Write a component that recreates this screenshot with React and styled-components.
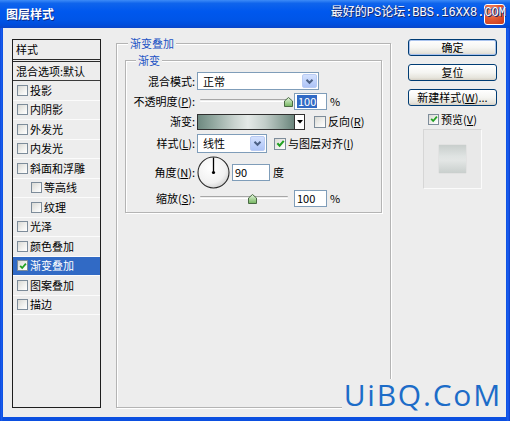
import React from 'react';
import styled, { createGlobalStyle } from 'styled-components';

const GlobalStyle = createGlobalStyle`
  html, body { margin: 0; padding: 0; background: #ffffff; }
  body { font-family: "Noto Sans CJK SC", "Noto Sans", sans-serif; font-size: 11px; color: #000; }
  * { box-sizing: border-box; }
`;

const Window = styled.div`
  position: relative;
  width: 510px;
  height: 421px;
  display: flex;
  flex-direction: column;
  background: linear-gradient(90deg, #0a3fd0 0px, #1a5ef0 1px, #0b4fe0 3px, #0b4fe0 506px, #1a5ef0 508px, #0a3acb 510px);
  overflow: hidden;
`;

const TitleBar = styled.div`
  position: relative;
  height: 28px;
  flex-shrink: 0;
  display: flex;
  align-items: center;
  justify-content: space-between;
  padding: 0 5px 0 6px;
  background: linear-gradient(180deg, #3d8bf7 0%, #0f64ec 12%, #0058ee 40%, #0055e8 70%, #004ddc 88%, #0a45c8 100%);
`;

const Title = styled.span`
  color: #ffffff;
  font-size: 12px;
  font-weight: bold;
  line-height: 14px;
  text-shadow: 1px 1px 0 #0a2a8a;
`;

const CloseBtn = styled.span`
  width: 21px;
  height: 21px;
  border: 1px solid #ffffff;
  border-radius: 3px;
  background: radial-gradient(circle at 35% 30%, #f59a7c 0%, #e25a33 45%, #c8391a 100%);
`;

const TitleMark = styled.span`
  position: absolute;
  right: 4px;
  top: 6px;
  color: #ffffff;
  font-family: "Liberation Mono", "Noto Sans CJK SC", monospace;
  font-size: 12px;
  letter-spacing: 0;
  line-height: 14px;
  white-space: nowrap;
  text-shadow: 1px 1px 0 #1a2a6a, -1px 0 0 #2a4aa0;
`;

const Client = styled.div`
  flex: 1;
  margin: 0 4px 4px 3px;
  background: #ededed;
  display: flex;
  align-items: flex-start;
  padding: 11px 9px 0 9px;
`;

/* ---------- left list ---------- */
const StyleList = styled.div`
  width: 89px;
  height: 369px;
  flex-shrink: 0;
  border: 1px solid #1e1e1e;
  display: flex;
  flex-direction: column;
  background: #ededed;
`;

const ListHeader = styled.div`
  height: 22px;
  padding-left: 3px;
  display: flex;
  align-items: center;
  border-bottom: 3px double #2a2a2a;
  line-height: 13px;
`;

const ListBlend = styled.div`
  height: 19px;
  padding-left: 3px;
  display: flex;
  align-items: center;
  border-bottom: 1px solid #3a3a3a;
  line-height: 13px;
`;

const ListItem = styled.div`
  height: 19.5px;
  display: flex;
  align-items: center;
  gap: 2px;
  padding-left: ${p => (p.$sub ? 18 : 4)}px;
  border-bottom: 1px solid #fbfbfb;
  background: ${p => (p.$selected ? '#316ac5' : 'transparent')};
  color: ${p => (p.$selected ? '#ffffff' : '#000000')};
  line-height: 13px;
`;

const Box = styled.span`
  display: inline-flex;
  align-items: center;
  justify-content: center;
  flex-shrink: 0;
  width: ${p => p.$size}px;
  height: ${p => p.$size}px;
  border: 1px solid ${p => (p.$dark ? '#1c5180' : '#7d8c9a')};
  background: linear-gradient(135deg, #d9d9d4 0%, #f2f2f0 60%, #ffffff 100%);
`;

function Check({ checked, size = 11, dark }) {
  return (
    <Box $size={size} $dark={dark}>
      {checked && (
        <svg width={size - 3} height={size - 3} viewBox="0 0 8 8">
          <path d="M1.2 3.8 L3.2 6 L6.9 1.6" stroke="#21a121" strokeWidth="1.8" fill="none" />
        </svg>
      )}
    </Box>
  );
}

/* ---------- group boxes ---------- */
const Group = styled.div`
  position: relative;
  flex-shrink: 0;
  width: ${p => p.$w}px;
  height: ${p => p.$h}px;
  margin: ${p => p.$m};
  padding: ${p => p.$pad};
  border: 1px solid #b4b4b4;
  box-shadow: 1px 1px 0 #ffffff, inset 1px 1px 0 #ffffff;
`;

const Legend = styled.span`
  position: absolute;
  top: -8px;
  left: ${p => p.$x}px;
  padding: 0 2px;
  background: #ededed;
  color: #1b52c4;
  line-height: 14px;
  font-size: 11px;
`;

const Row = styled.div`
  height: ${p => p.$h}px;
  display: flex;
  align-items: center;
`;

const Label = styled.span`
  width: 69px;
  margin-right: 2px;
  flex-shrink: 0;
  text-align: right;
  line-height: 13px;
  white-space: nowrap;
`;

const U = styled.span`
  text-decoration: underline;
`;

const Select = styled.div`
  width: ${p => p.$w}px;
  height: ${p => p.$h}px;
  border: 1px solid #7f9db9;
  background: #ffffff;
  display: flex;
  align-items: stretch;
  justify-content: space-between;
  padding: 1px;
`;

const SelectText = styled.span`
  padding-left: 4px;
  display: flex;
  align-items: center;
  line-height: 13px;
`;

const DropBtn = styled.span`
  width: 15px;
  display: flex;
  align-items: center;
  justify-content: center;
  border-radius: 2px;
  border: 1px solid #b9cbf3;
  background: linear-gradient(180deg, #d4e1fd 0%, #bccffa 60%, #aec4f6 100%);
`;

function Chevron() {
  return (
    <svg width="9" height="7" viewBox="0 0 9 7">
      <path d="M1.5 1.8 L4.5 4.8 L7.5 1.8" stroke="#4d6185" strokeWidth="2" fill="none" />
    </svg>
  );
}

const SliderWrap = styled.div`
  position: relative;
  width: 94px;
  height: 14px;
  flex-shrink: 0;
  padding: 0 3px 0 3px;
  display: flex;
  align-items: center;
`;

const Track = styled.span`
  flex: 1;
  height: 3px;
  border-top: 1px solid #a6a6a6;
  border-bottom: 1px solid #ffffff;
  border-radius: 1px;
  position: relative;
  top: -1px;
`;

const Thumb = styled.svg`
  position: absolute;
  top: 2px;
`;

function Slider({ pct }) {
  const center = 3 + pct * 88;
  return (
    <SliderWrap>
      <Track />
      <Thumb width="9" height="10" viewBox="0 0 9 10" style={{ left: center - 4.5 }}>
        <defs>
          <linearGradient id="tg" x1="0" y1="0" x2="0" y2="1">
            <stop offset="0" stopColor="#e4f5dc" />
            <stop offset="1" stopColor="#73b55e" />
          </linearGradient>
        </defs>
        <path d="M0.5 4 L4.5 0.5 L8.5 4 L8.5 9.5 L0.5 9.5 Z" fill="url(#tg)" stroke="#4a6a44" strokeWidth="1" />
      </Thumb>
    </SliderWrap>
  );
}

const Input = styled.div`
  width: ${p => p.$w}px;
  height: 17px;
  margin-left: ${p => p.$ml}px;
  border: 1px solid #7f9db9;
  background: #ffffff;
  display: flex;
  align-items: center;
  padding-left: 2px;
  line-height: 13px;
`;

const Selected = styled.span`
  background: #316ac5;
  color: #ffffff;
  padding: 0 1px;
`;

const Unit = styled.span`
  margin-left: 3px;
  line-height: 13px;
`;

const Gradient = styled.div`
  width: 98px;
  height: 16px;
  border: 1px solid #303030;
  background: linear-gradient(90deg, #6e8980 0%, #90a69e 15%, #c9d3cf 38%, #e4e9e7 52%, #c2cdc9 70%, #8ea39b 88%, #6a857c 100%);
`;

const GradArrow = styled.div`
  width: 10px;
  height: 16px;
  border: 1px solid #303030;
  border-left: none;
  background: #ffffff;
  display: flex;
  align-items: center;
  justify-content: center;
`;

const CheckLabel = styled.span`
  display: flex;
  align-items: center;
  gap: 2px;
  margin-left: ${p => p.$ml}px;
  line-height: 13px;
  white-space: nowrap;
`;

function Dial() {
  return (
    <svg width="33" height="33" viewBox="0 0 33 33">
      <defs>
        <radialGradient id="dg" cx="0.4" cy="0.35" r="0.7">
          <stop offset="0" stopColor="#ffffff" />
          <stop offset="0.7" stopColor="#f1f1f1" />
          <stop offset="1" stopColor="#cfcfcf" />
        </radialGradient>
      </defs>
      <circle cx="16.5" cy="16.5" r="15.5" fill="url(#dg)" stroke="#2a2a2a" strokeWidth="1.1" />
      <line x1="16.5" y1="16.5" x2="16.5" y2="1.5" stroke="#000" strokeWidth="1.3" />
      <circle cx="16.5" cy="16.5" r="1.6" fill="#000" />
    </svg>
  );
}

/* ---------- right column ---------- */
const RightCol = styled.div`
  width: 89px;
  margin-left: 17px;
  flex-shrink: 0;
  display: flex;
  flex-direction: column;
  align-items: center;
`;

const Button = styled.div`
  width: 89px;
  height: 17px;
  margin-bottom: 8px;
  border: 1px solid #003c74;
  border-radius: 3px;
  background: linear-gradient(180deg, #ffffff 0%, #f5f5f2 50%, #e6e4dc 85%, #d6d0c5 100%);
  box-shadow: ${p => (p.$default ? 'inset 0 0 0 1px #a9c3ee' : 'none')};
  display: flex;
  align-items: center;
  justify-content: center;
  line-height: 13px;
  white-space: nowrap;
`;

const PreviewRow = styled.div`
  height: 12px;
  margin-top: -1px;
  display: flex;
  align-items: center;
  gap: 2px;
  line-height: 13px;
`;

const PreviewBox = styled.div`
  width: 59px;
  height: 60px;
  margin-top: 4px;
  border: 1px solid;
  border-color: #d6d6d6 #fbfbfb #fbfbfb #d6d6d6;
  background: #e9e9e9;
  display: flex;
  align-items: center;
  justify-content: center;
`;

const PreviewSwatch = styled.div`
  width: 27px;
  height: 28px;
  background: linear-gradient(180deg, #c8cecc 0%, #dfe3e2 40%, #e3e6e5 55%, #c9cfcd 100%);
  box-shadow: 0 0 1px #c0c0c0;
`;

const Watermark = styled.div`
  position: absolute;
  right: 10px;
  bottom: 10px;
  height: 32px;
  padding-left: 2px;
  background: #ededed;
  color: #1c6cc8;
  font-family: "Open Sans", "DejaVu Sans", sans-serif;
  font-size: 30px;
  font-weight: 500;
  line-height: 32px;
  letter-spacing: 1.8px;
  margin-right: -2px;
`;

const items = [
  { t: '投影' },
  { t: '内阴影' },
  { t: '外发光' },
  { t: '内发光' },
  { t: '斜面和浮雕' },
  { t: '等高线', sub: true },
  { t: '纹理', sub: true },
  { t: '光泽' },
  { t: '颜色叠加' },
  { t: '渐变叠加', checked: true, selected: true },
  { t: '图案叠加' },
  { t: '描边' },
];

export default function App() {
  return (
    <>
      <GlobalStyle />
      <Window>
        <TitleBar>
          <Title>图层样式</Title>
          <CloseBtn />
          <TitleMark>最好的PS论坛:BBS.16XX8.COM</TitleMark>
        </TitleBar>
        <Client>
          <StyleList>
            <ListHeader>样式</ListHeader>
            <ListBlend>混合选项:默认</ListBlend>
            {items.map(it => (
              <ListItem key={it.t} $sub={it.sub} $selected={it.selected}>
                <Check checked={it.checked} size={11} />
                <span>{it.t}</span>
              </ListItem>
            ))}
          </StyleList>

          <Group $w={275} $h={365} $m="4px 0 0 15px" $pad="16px 8px 0 8px">
            <Legend $x={11}>渐变叠加</Legend>
            <Group $w={257} $h={153} $m="0" $pad="10px 0 0 0">
              <Legend $x={10}>渐变</Legend>
              <Row $h={20}>
                <Label>混合模式:</Label>
                <Select $w={122} $h={18}>
                  <SelectText>正常</SelectText>
                  <DropBtn><Chevron /></DropBtn>
                </Select>
              </Row>
              <Row $h={21}>
                <Label>不透明度(<U>P</U>):</Label>
                <Slider pct={1} />
                <Input $w={33} $ml={3}><Selected>100</Selected></Input>
                <Unit>%</Unit>
              </Row>
              <Row $h={19}>
                <Label>渐变:</Label>
                <Gradient />
                <GradArrow>
                  <svg width="6" height="4" viewBox="0 0 6 4"><path d="M0 0 L6 0 L3 3.5 Z" fill="#000" /></svg>
                </GradArrow>
                <CheckLabel $ml={9}>
                  <Check size={12} />
                  <span>反向(<U>R</U>)</span>
                </CheckLabel>
              </Row>
              <Row $h={25}>
                <Label>样式(<U>L</U>):</Label>
                <Select $w={70} $h={19}>
                  <SelectText>线性</SelectText>
                  <DropBtn><Chevron /></DropBtn>
                </Select>
                <CheckLabel $ml={7}>
                  <Check size={12} checked />
                  <span>与图层对齐(<U>I</U>)</span>
                </CheckLabel>
              </Row>
              <Row $h={32}>
                <Label>角度(<U>N</U>):</Label>
                <Dial />
                <Input $w={38} $ml={2}>90</Input>
                <Unit>度</Unit>
              </Row>
              <Row $h={21}>
                <Label>缩放(<U>S</U>):</Label>
                <Slider pct={0.6} />
                <Input $w={33} $ml={3}>100</Input>
                <Unit>%</Unit>
              </Row>
            </Group>
          </Group>

          <RightCol>
            <Button $default>确定</Button>
            <Button>复位</Button>
            <Button>新建样式(<U>W</U>)...</Button>
            <PreviewRow>
              <Check size={11} checked />
              <span>预览(<U>V</U>)</span>
            </PreviewRow>
            <PreviewBox>
              <PreviewSwatch />
            </PreviewBox>
          </RightCol>
        </Client>
        <Watermark>UiBQ.CoM</Watermark>
      </Window>
    </>
  );
}
